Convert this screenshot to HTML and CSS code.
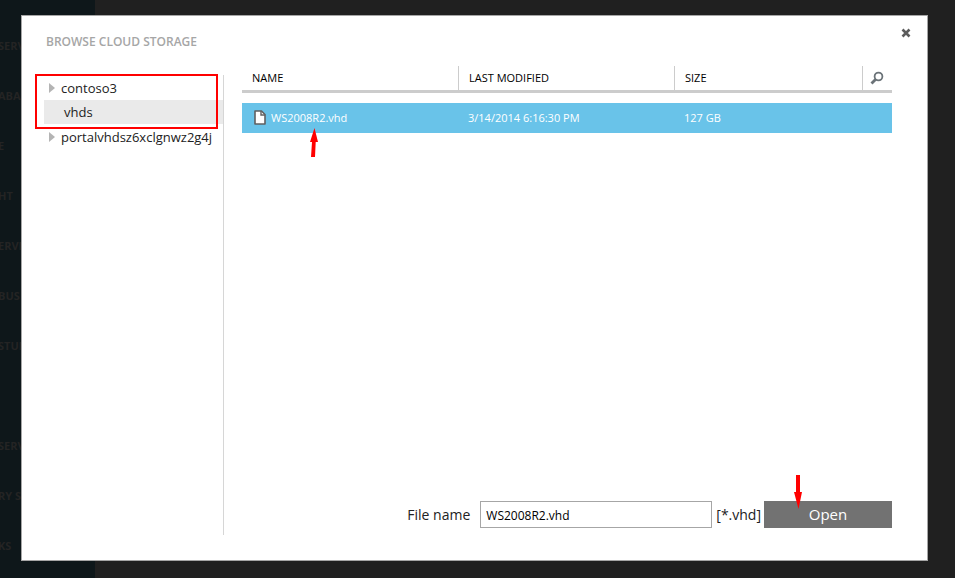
FILE: index.html
```html
<!DOCTYPE html>
<html lang="en">
<head>
<meta charset="utf-8">
<title>Browse Cloud Storage</title>
<link rel="stylesheet" href="styles.css">
</head>
<body>
<nav class="services">
  <a href="#">SERV</a>
  <a href="#">ABAS</a>
  <a href="#">E</a>
  <a href="#">HT</a>
  <a href="#">ERVI</a>
  <a href="#">BUS</a>
  <a href="#">STUD</a>
  <span class="blank"></span>
  <a href="#">SERV</a>
  <a href="#">RY SE</a>
  <a href="#">KS</a>
</nav>

<section class="dialog" role="dialog" aria-labelledby="dialog-title">
  <header class="dialog-head">
    <h1 id="dialog-title">BROWSE CLOUD STORAGE</h1>
    <button class="close" type="button" aria-label="Close">
      <svg width="10" height="10" viewBox="0 0 10 10"><path d="M1.5 1.5 8.500 8.500M8.500 1.500 1.500 8.500" stroke="#5c5c5c" stroke-width="2.600" fill="none"/></svg>
    </button>
  </header>

  <div class="dialog-body">
    <aside class="tree">
      <ul>
        <li><button type="button"><svg width="6" height="10" viewBox="0 0 6 10"><path d="M0 0 6 5 0 10z" fill="#b4b4b4"/></svg>contoso3</button></li>
        <li><button class="child" type="button">vhds</button></li>
        <li><button type="button"><svg width="6" height="10" viewBox="0 0 6 10"><path d="M0 0 6 5 0 10z" fill="#b4b4b4"/></svg>portalvhdsz6xclgnwz2g4j</button></li>
      </ul>
      <span class="highlight"></span>
    </aside>

    <div class="content">
      <table class="files">
        <colgroup><col class="c-name"><col class="c-date"><col class="c-size"><col class="c-search"></colgroup>
        <thead>
          <tr>
            <th>NAME</th>
            <th>LAST MODIFIED</th>
            <th>SIZE</th>
            <th class="search-cell">
              <button class="search" type="button" aria-label="Search">
                <svg width="14" height="14" viewBox="0 0 14 14" fill="none" stroke="#6b7378"><circle cx="8.500" cy="5.500" r="3.900" stroke-width="1.800"/><path d="M5.500 8.500 1.500 12.500" stroke-width="2.800"/></svg>
              </button>
            </th>
          </tr>
        </thead>
        <tbody>
          <tr>
            <td>
              <span class="file">
                <svg width="12" height="15" viewBox="0 0 12 15"><path d="M1 1H7.500L11 4.500V14H1z" fill="#fff" stroke="#606060" stroke-width="1.600" stroke-linejoin="round"/><path d="M7 1V5H11" fill="none" stroke="#606060" stroke-width="1.400"/></svg>
                WS2008R2.vhd
              </span>
              <svg class="arrow arrow-file" width="8" height="29" viewBox="0 0 8 29"><path d="M4.500 0 8 14H5.700L5 29H1L2 14H0z" fill="#f00"/></svg>
            </td>
            <td>3/14/2014 6:16:30 PM</td>
            <td>127 GB</td>
            <td></td>
          </tr>
        </tbody>
      </table>

      <form class="open-bar">
        <label for="filename">File name</label>
        <input id="filename" type="text" value="WS2008R2.vhd">
        <span class="filter">[*.vhd]</span>
        <button class="open" type="button">Open
          <svg class="arrow arrow-open" width="8" height="34" viewBox="0 0 8 34"><path d="M2 0H6V17H8L4.500 34 0 17H2z" fill="#f00"/></svg>
        </button>
      </form>
    </div>
  </div>
</section>
</body>
</html>
```
FILE: styles.css
```css
* {
  box-sizing: border-box;
}

body {
  margin: 0;
  height: 100vh;
  overflow: hidden;
  background: #202020;
  font-family: "Open Sans", "Noto Sans", sans-serif;
  color: #222;
}

button,
input {
  font-family: inherit;
  color: inherit;
}

button {
  padding: 0;
  border: 0;
  background: none;
  cursor: pointer;
}

svg {
  display: block;
  flex: none;
}

/* Dimmed page behind the dialog */
.services {
  display: flex;
  flex-direction: column;
  width: 95px;
  height: 100%;
  padding-top: 21px;
  background: #0e171a;
}

.services a,
.services .blank {
  flex: none;
  height: 50px;
  font-size: 11px;
  font-weight: 700;
  line-height: 50px;
  text-indent: -2px;
  color: #242424;
  text-decoration: none;
  white-space: nowrap;
}

.dialog {
  position: absolute;
  inset: 15px 27px 17px 21px;
  display: flex;
  flex-direction: column;
  padding: 0 35px 25px 22px;
  border: 1px solid #a6a6a6;
  background: #fff;
}

.dialog-head {
  display: flex;
  justify-content: space-between;
  height: 50px;
  padding-left: 2px;
}

h1 {
  margin: 17px 0 0;
  font-size: 12px;
  font-weight: 600;
  line-height: 18px;
  color: #a6a6a6;
}

.close {
  align-self: flex-start;
  margin: 12px -19px 0 0;
}

.dialog-body {
  flex: 1;
  display: flex;
  gap: 18px;
}

.tree {
  position: relative;
  flex: none;
  width: 180px;
  margin-top: 9px;
  border-right: 1px solid #d6d6d6;
}

.tree ul {
  margin: 0;
  padding: 1px 0 0;
  list-style: none;
}

.tree button {
  display: flex;
  align-items: center;
  gap: 6px;
  width: 100%;
  height: 24px;
  padding-left: 5px;
  font-size: 13px;
}

.tree .child {
  padding-left: 20px;
  background: #eaeaea;
}

.tree li + li + li {
  padding-top: 1px;
}

.highlight {
  position: absolute;
  top: -1px;
  left: -9px;
  width: 183px;
  height: 55px;
  border: 2px solid #f00;
  pointer-events: none;
}

.content {
  flex: 1;
  display: flex;
  flex-direction: column;
  justify-content: space-between;
  padding-bottom: 7px;
}

.files {
  width: 100%;
  table-layout: fixed;
  border-spacing: 0;
  font-size: 11px;
}

.c-name,
.c-date {
  width: 216px;
}

.c-search {
  width: 30px;
}

th {
  position: relative;
  height: 27px;
  padding: 0 10px 2px;
  border-bottom: 3px solid #ccc;
  font-weight: 400;
  text-align: left;
  color: #000;
}

th + th {
  padding-left: 11px;
}

th + th::before {
  content: "";
  position: absolute;
  top: 0;
  bottom: 0;
  left: 0;
  width: 1px;
  background: #ccc;
}

th.search-cell {
  padding: 2px 8px 0;
}

tbody::before {
  content: "";
  display: block;
  height: 10px;
}

td {
  position: relative;
  height: 30px;
  padding: 0 10px 2px;
  background: #69c3e9;
  color: #fff;
}

.file {
  display: flex;
  align-items: center;
  gap: 5px;
  padding-left: 2px;
}

.arrow {
  position: absolute;
  pointer-events: none;
}

.arrow-file {
  top: 25px;
  left: 68px;
}

.open-bar {
  display: flex;
  justify-content: flex-end;
  align-items: center;
  font-size: 14px;
}

.open-bar input {
  width: 232px;
  height: 27px;
  margin: 0 4px 0 10px;
  padding: 1px 5px 0;
  border: 1px solid #a6a6a6;
  font-size: 12px;
  color: #000;
}

.open {
  position: relative;
  width: 128px;
  height: 27px;
  margin-left: 3px;
  padding-bottom: 2px;
  background: #727272;
  font-size: 15px;
  color: #fff;
}

.arrow-open {
  top: -26px;
  left: 30px;
}
```
